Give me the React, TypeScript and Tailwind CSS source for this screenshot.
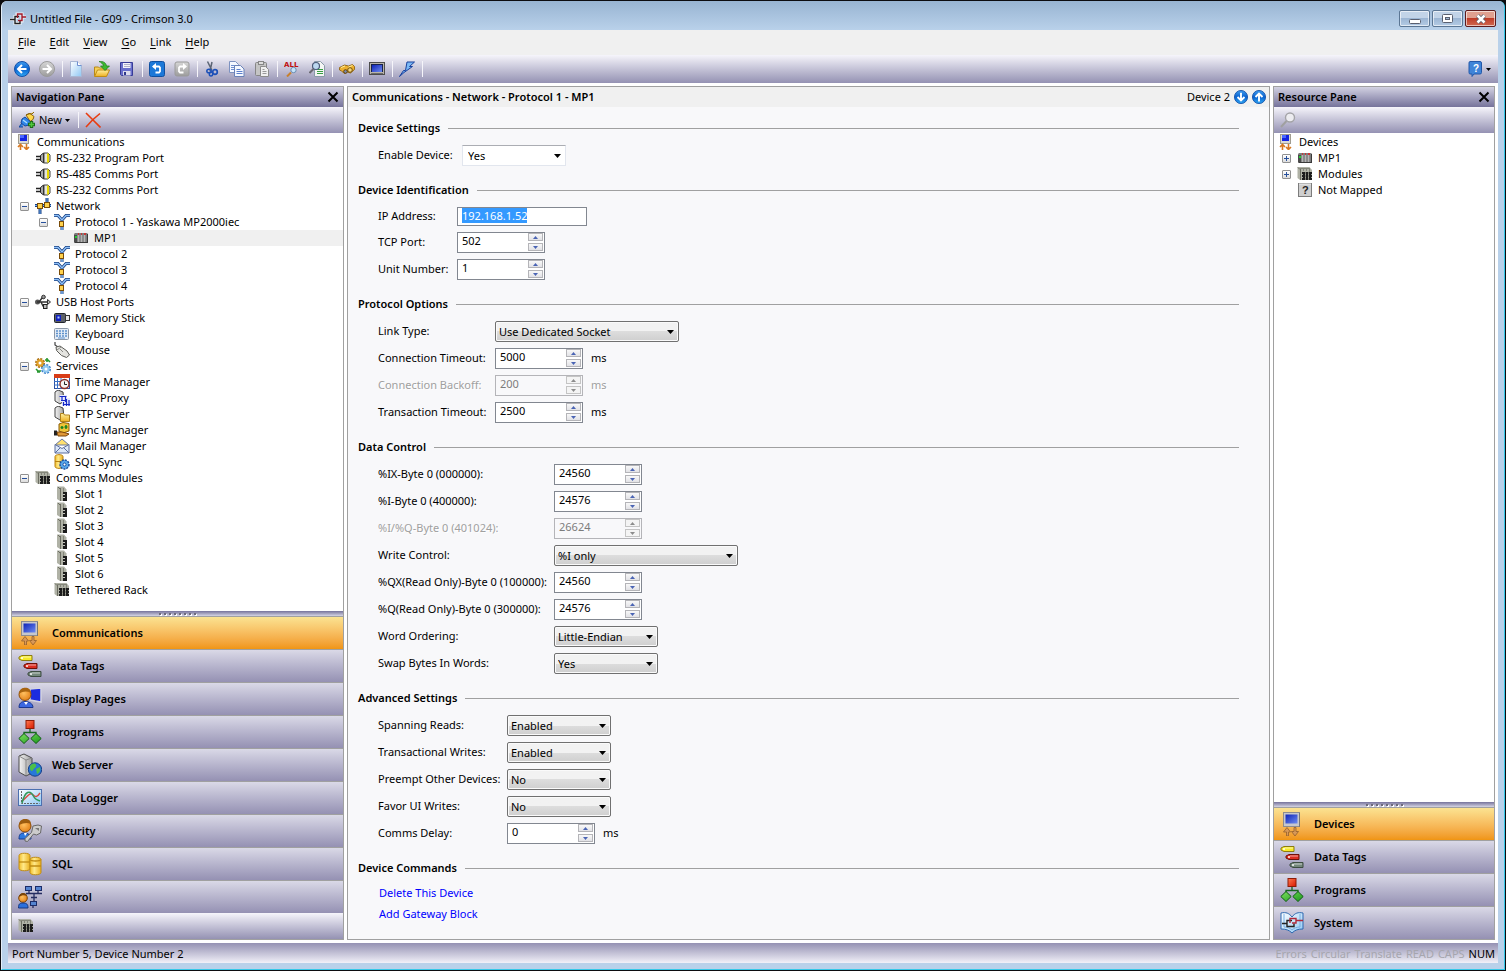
import { useEffect, useId, useRef } from 'react';
import type { ReactNode } from 'react';

type IconProps = { size?: number };

function Svg16({ size = 16, children }: IconProps & { children: ReactNode }) {
  return (
    <svg width={size} height={size} viewBox="0 0 16 16" fill="none" className="shrink-0" aria-hidden="true">
      {children}
    </svg>
  );
}

function Svg24({ children }: { children: ReactNode }) {
  return (
    <svg width={24} height={24} viewBox="0 0 24 24" fill="none" className="shrink-0" aria-hidden="true">
      {children}
    </svg>
  );
}

/* ---------- shared gradients ---------- */

function Gradients() {
  return (
    <svg width="0" height="0" className="absolute" aria-hidden="true">
      <defs>
        <linearGradient id="gBlue" x1="0" y1="0" x2="0" y2="1">
          <stop offset="0" stopColor="#3f9df0" />
          <stop offset="0.5" stopColor="#0a62cf" />
          <stop offset="1" stopColor="#2fa8f5" />
        </linearGradient>
        <linearGradient id="gGrey" x1="0" y1="0" x2="0" y2="1">
          <stop offset="0" stopColor="#d6d6d6" />
          <stop offset="1" stopColor="#9c9c9c" />
        </linearGradient>
        <linearGradient id="gGold" x1="0" y1="0" x2="0" y2="1">
          <stop offset="0" stopColor="#fff0a0" />
          <stop offset="1" stopColor="#eeb020" />
        </linearGradient>
        <linearGradient id="gGoldH" x1="0" y1="0" x2="1" y2="0">
          <stop offset="0" stopColor="#f2bd28" />
          <stop offset="0.4" stopColor="#ffe98a" />
          <stop offset="1" stopColor="#eab01e" />
        </linearGradient>
        <linearGradient id="gScreen" x1="0" y1="0" x2="1" y2="1">
          <stop offset="0" stopColor="#0e23b8" />
          <stop offset="1" stopColor="#6f8cf0" />
        </linearGradient>
        <linearGradient id="gRed" x1="0" y1="0" x2="1" y2="1">
          <stop offset="0" stopColor="#ff7a50" />
          <stop offset="1" stopColor="#d81800" />
        </linearGradient>
        <linearGradient id="gGreen" x1="0" y1="0" x2="1" y2="1">
          <stop offset="0" stopColor="#7fe060" />
          <stop offset="1" stopColor="#18981a" />
        </linearGradient>
        <linearGradient id="gServer" x1="0" y1="0" x2="1" y2="0">
          <stop offset="0" stopColor="#f4f4f4" />
          <stop offset="1" stopColor="#a0a0a0" />
        </linearGradient>
        <radialGradient id="gFace" cx="0.4" cy="0.4" r="0.7">
          <stop offset="0" stopColor="#ffc060" />
          <stop offset="1" stopColor="#e07a10" />
        </radialGradient>
        <linearGradient id="gSky" x1="0" y1="0" x2="1" y2="1">
          <stop offset="0" stopColor="#ffffff" />
          <stop offset="1" stopColor="#8fc8f4" />
        </linearGradient>
      </defs>
    </svg>
  );
}

/* ---------- title bar and toolbar icons ---------- */

const AppIcon = () => (
  <Svg16>
    <path d="M0 8.500h5M9 5.500H5v7h5V9M7 8V3h5v7H8M12 6h4" stroke="#eef4fa" strokeWidth="3" />
    <path d="M0 8.500h5M9 5.500H5v7h5V10" stroke="#222" strokeWidth="1.400" />
    <path d="M7.500 7V3h4.500v6.500H8M12 6h4" stroke="#a01828" strokeWidth="1.400" />
  </Svg16>
);

const BackIcon = () => (
  <Svg16>
    <circle cx="8" cy="8" r="7.500" fill="url(#gBlue)" stroke="#1450a8" />
    <path d="M12.500 8H4.500M8 4L4 8l4 4" stroke="#fff" strokeWidth="2" />
  </Svg16>
);

const ForwardIcon = () => (
  <Svg16>
    <circle cx="8" cy="8" r="7.500" fill="url(#gGrey)" stroke="#9a9a9a" />
    <path d="M3.500 8h8M8 4l4 4-4 4" stroke="#fff" strokeWidth="2" />
  </Svg16>
);

const ArrowCircle = ({ up = false }: { up?: boolean }) => (
  <svg width="14" height="14" viewBox="0 0 16 16" fill="none" className="shrink-0" aria-hidden="true">
    <circle cx="8" cy="8" r="7.500" fill="url(#gBlue)" stroke="#1450a8" />
    <path d={up ? 'M8 13V4.500M4 8l4-4 4 4' : 'M8 3v8.500M4 8l4 4 4-4'} stroke="#fff" strokeWidth="2.200" />
  </svg>
);

const NewFileIcon = () => (
  <Svg16>
    <path d="M1.500 0.500h7l4 4v11h-11z" fill="url(#gSky)" stroke="#a9b7d3" />
    <path d="M8.500 0.500v4h4" fill="#fff" stroke="#6f8fd0" />
  </Svg16>
);

const OpenIcon = () => (
  <Svg16>
    <path d="M0.500 14.500v-8.500h4l1 1h7v7.500z" fill="#f5cf58" stroke="#b88a18" />
    <path d="M0.500 15.500l3-6.500h12l-3 6.500z" fill="url(#gGold)" stroke="#c08c14" />
    <path d="M5 0.500c4-0.500 7 1 7.500 4.500h3L11 9.500 6.500 5H9.500C9 3 7.500 1.500 5 0.500z" fill="#3cb830" stroke="#1c7a18" strokeWidth="0.700" />
  </Svg16>
);

const SaveIcon = () => (
  <Svg16>
    <path d="M1.500 1.500h12v13h-11l-1-1z" fill="#6a70cc" stroke="#383c98" />
    <path d="M4 2h7.500v5H4z" fill="#f4f4fa" />
    <path d="M5 3.500h6M5 5.500h6" stroke="#b0b0c8" />
    <path d="M4 10h7.500v4.500H4z" fill="#dcdcec" />
    <path d="M5 11h2v3H5z" fill="#30388a" />
  </Svg16>
);

const UndoIcon = () => (
  <Svg16>
    <rect x="0.500" y="0.500" width="15" height="15" rx="2" fill="#1c78d8" stroke="#1050a0" />
    <path d="M4.500 5.500h5.500l1 1v4l-1 1H6.500" stroke="#fff" strokeWidth="1.800" />
    <path d="M3 5.500l4-3.500v7z" fill="#fff" />
  </Svg16>
);

const RedoIcon = () => (
  <Svg16>
    <rect x="1" y="1" width="14" height="14" rx="2" fill="url(#gGrey)" stroke="#9a9a9a" />
    <path d="M11 5.500H6l-1 1v4l1 1h3.500" stroke="#fff" strokeWidth="1.800" />
    <path d="M13 5.500L9 2v7z" fill="#fff" />
  </Svg16>
);

const CutIcon = () => (
  <Svg16>
    <path d="M3.500 0.500L8 9.500M8 1L6 10" stroke="#5b6474" strokeWidth="1.500" />
    <ellipse cx="5" cy="10" rx="2.200" ry="1.800" stroke="#1c50b8" strokeWidth="1.500" />
    <ellipse cx="11" cy="11" rx="2.300" ry="2.300" stroke="#1c50b8" strokeWidth="1.700" />
    <ellipse cx="7" cy="13" rx="1.700" ry="2" stroke="#1c50b8" strokeWidth="1.500" />
  </Svg16>
);

const CopyIcon = () => (
  <Svg16>
    <path d="M0.500 0.500h6l3 3v8h-9z" fill="#f4f8ff" stroke="#7d92c0" />
    <path d="M2 4.500h4M2 6.500h4M2 8.500h4" stroke="#6f8fd0" />
    <path d="M5.500 4.500h6l3.500 3.500v7.500H5.500z" fill="#f4f8ff" stroke="#6a82b8" />
    <path d="M7.500 8.500h4M7.500 10.500h6M7.500 12.500h6" stroke="#5c80cc" />
  </Svg16>
);

const PasteIcon = () => (
  <Svg16>
    <rect x="1.500" y="1.500" width="11" height="13" rx="1" fill="#c4c4c4" stroke="#868686" />
    <rect x="4.500" y="0.500" width="5" height="3" fill="#dedede" stroke="#868686" />
    <path d="M6.500 5.500h5l3 3v7h-8z" fill="#f0f0f0" stroke="#8c8c8c" />
    <path d="M8.500 8.500h2M8.500 10.500h4M8.500 12.500h4" stroke="#999" />
  </Svg16>
);

const FindAllIcon = () => (
  <Svg16>
    <text x="0" y="6" fontSize="7" fontWeight="700" fill="#c01010" fontFamily="DejaVu Sans">ALL</text>
    <circle cx="9.500" cy="9" r="2.700" fill="#c4e4fa" stroke="#6c8cb0" />
    <path d="M7 11.500L3 15.500" stroke="#c8802c" strokeWidth="2" />
  </Svg16>
);

const FindPageIcon = () => (
  <Svg16>
    <path d="M5.500 0.500h6l4 4v11h-10z" fill="#f4f6f4" stroke="#8a9aa8" />
    <path d="M8 8.500h6M8 10.500h6M8 12.500h6" stroke="#36a040" />
    <circle cx="7" cy="5" r="3.500" fill="#bcd8f0" stroke="#4a5a78" strokeWidth="1.200" />
    <path d="M4.500 8L0.500 12" stroke="#6a6a72" strokeWidth="2" />
  </Svg16>
);

const BinocularIcon = () => (
  <Svg16>
    <path d="M0.500 6.500l5-2.500 4 1 4-1.500 2 2v3l-4 3.500-3-1-3 1.500-3-2.500-2-1z" fill="#ecb030" stroke="#8a5c08" strokeWidth="0.800" />
    <circle cx="11" cy="9" r="2.300" fill="#f4d880" stroke="#704c08" />
    <circle cx="6.500" cy="10.500" r="1.800" fill="#7c8cac" stroke="#604008" />
    <path d="M2 6.500l4-1.500M9.500 6l4-1.500" stroke="#fff0a0" />
  </Svg16>
);

const MonitorIcon = () => (
  <Svg16>
    <rect x="0.500" y="1.500" width="15" height="12" fill="#b8b4a8" stroke="#4c4c4c" />
    <rect x="2" y="3" width="12" height="8" fill="#16204c" />
    <rect x="3" y="4" width="10" height="7" fill="url(#gScreen)" />
    <path d="M2 12.500h12" stroke="#6a6a6a" />
  </Svg16>
);

const BoltIcon = () => (
  <Svg16>
    <path d="M8 1h7.500l-5 4.500h3L5 11.500 0.500 15.500 4.500 9.500h2z" fill="#7ab8f4" stroke="#18409c" />
  </Svg16>
);

const HelpIcon = () => (
  <Svg16>
    <path d="M2 0.500h10q1.500 0 1.500 1.500v9.500q0 1.500-1.500 1.500H6L4 15.500V13H2Q1 13 1 11.500V2Q1 0.500 2 0.500z" fill="#3f84d8" stroke="#2458a8" />
    <text x="5" y="11" fontSize="10" fontWeight="700" fill="#fff" fontFamily="Liberation Sans">?</text>
  </Svg16>
);

const PlugAddIcon = () => (
  <Svg16>
    <path d="M7 3l3-1.500 3 .5 2-2M9 6L7 3l4-1.500 4 3-1 3-3 2z" fill="#ffd84c" stroke="#8a6410" />
    <path d="M3 7l3-2 6 5-2 3-4 1-4-3zM3 11l-3 4h4" fill="#2f86e8" stroke="#14489c" />
    <path d="M4 8l4 3" stroke="#a8dcff" strokeWidth="1.400" />
    <path d="M12.500 9v7M9 12.500h7" stroke="#1c6a18" strokeWidth="3.400" />
    <path d="M12.500 10v5M10 12.500h5" stroke="#50c83c" strokeWidth="1.600" />
  </Svg16>
);

const DeleteIcon = () => (
  <Svg16>
    <path d="M1 1l6 6 8.500 8.500M15 1.500L8 7.500 1 15" stroke="#e83c10" strokeWidth="1.600" />
  </Svg16>
);

const CloseIcon = () => (
  <svg width="12" height="12" viewBox="0 0 12 12" fill="none" aria-hidden="true">
    <path d="M1.500 1.500l9 9M10.500 1.500l-9 9" stroke="#000" strokeWidth="2" />
  </svg>
);

const SearchIcon = () => (
  <Svg16>
    <circle cx="10" cy="5.500" r="4.500" fill="#ececf0" stroke="#a4a4a8" strokeWidth="1.400" />
    <path d="M6.500 9L1 15" stroke="#a0a0a0" strokeWidth="2" />
  </Svg16>
);

/* ---------- tree icons ---------- */

const CommsSmall = () => (
  <Svg16>
    <rect x="2.500" y="0.500" width="10" height="9" fill="#d8d8d4" stroke="#a09c90" />
    <rect x="4" y="1" width="7" height="6" fill="#1424e0" />
    <path d="M4 1h4v3H4z" fill="#4c68ff" />
    <path d="M4.500 16v-5M2 13l2.500-2.500L7 13M10.500 10v5M8 13l2.500 2.500L13 13" stroke="#d87820" strokeWidth="1.600" />
  </Svg16>
);

const PortIcon = () => (
  <Svg16>
    <path d="M1 6.500h5M1 9.500h5" stroke="#222" strokeWidth="1.500" />
    <path d="M5.500 5.500l3-2.500v10l-3-2.500z" fill="#a8a8a8" stroke="#222" />
    <path d="M9 3h4l2 2v6l-2 2H9z" fill="#e4e4dc" stroke="#444" />
    <path d="M13 3.500v9" stroke="#e8d800" strokeWidth="2" />
  </Svg16>
);

const NetworkIcon = () => (
  <Svg16>
    <path d="M0 7.500h16M5 8v8M12 0v7" stroke="#173f80" strokeWidth="3" />
    <path d="M0 7.500h16M5 8v8M12 0v7" stroke="#6eaaf0" />
    <rect x="2.500" y="5.500" width="5" height="5" fill="#ffd24c" stroke="#7a4c08" />
    <rect x="9.500" y="4.500" width="5" height="5" fill="#ffd24c" stroke="#7a4c08" />
  </Svg16>
);

const ProtocolIcon = () => (
  <Svg16>
    <path d="M0 1.500h4l4 4.500 4-4.500h4M8 7v9" stroke="#173f80" strokeWidth="3" />
    <path d="M0 1.500h4l4 4.500 4-4.500h4M8 7v9" stroke="#8ec0f8" strokeWidth="1.400" />
    <rect x="5.500" y="7.500" width="4" height="5" fill="#ffd24c" stroke="#7a4c08" />
  </Svg16>
);

const PlcIcon = () => (
  <Svg16>
    <path d="M1 4l1-1h12.500v10H1z" fill="#7c7c7c" />
    <path d="M1 5h3v7H1z" fill="#4c4c4c" />
    <path d="M5.500 5v7M8.500 5v7M11.500 5v7" stroke="#b4b4b4" strokeWidth="1.500" />
    <path d="M2 6h2v2H2z" fill="#20d030" />
    <path d="M5 4h1M8 4h1M11 4h2" stroke="#e02020" strokeWidth="1.500" />
    <path d="M14.500 4v9M2 12.500h13" stroke="#3a3a3a" />
  </Svg16>
);

const UsbIcon = () => (
  <Svg16>
    <circle cx="2.500" cy="8" r="2.500" fill="#555" />
    <path d="M2 8h12M4 8l3-4h2M6 8l2 4h2" stroke="#333" strokeWidth="1.400" />
    <path d="M12.500 5.500L15.500 8l-3 2.500z" fill="#bbb" stroke="#333" />
    <circle cx="8.500" cy="3" r="1.800" fill="#999" stroke="#333" />
    <rect x="8.500" y="10.500" width="3.500" height="4" fill="#bbb" stroke="#222" />
  </Svg16>
);

const StickIcon = () => (
  <Svg16>
    <rect x="0.500" y="3.500" width="11" height="9" rx="1" fill="#5c6068" stroke="#20242c" />
    <rect x="2" y="5" width="5" height="6" fill="#1020c0" />
    <rect x="3.500" y="6.500" width="2" height="2" fill="#b0c8ff" />
    <rect x="11.500" y="5.500" width="4" height="5" fill="#e8e8e8" stroke="#333" />
  </Svg16>
);

const KeyboardIcon = () => (
  <Svg16>
    <rect x="0.500" y="2.500" width="14" height="11" rx="1" fill="#e4ecf6" stroke="#8c98a8" />
    <path d="M2 5h11M2 7.500h11M2 10h11" stroke="#5c90cc" strokeWidth="1.500" strokeDasharray="2 1" />
    <path d="M4 12h7" stroke="#5c90cc" />
  </Svg16>
);

const MouseIcon = () => (
  <Svg16>
    <path d="M1 0v3l3 2" stroke="#444" strokeWidth="1.200" />
    <path d="M2 5l4-1 7 5 2.500 4-3 2.500-5-2-5-5z" fill="#e4e4e0" stroke="#5c5c58" />
    <path d="M3 8l4-3M6 7l3 3" stroke="#8a8a86" />
  </Svg16>
);

const GearsIcon = () => (
  <Svg16>
    <circle cx="5" cy="5" r="4" stroke="#a86c10" strokeWidth="2" strokeDasharray="2 1.100" />
    <circle cx="5" cy="5" r="2.600" fill="#fff" stroke="#e0a028" strokeWidth="2.200" />
    <circle cx="11" cy="11" r="4" stroke="#3c80c8" strokeWidth="2" strokeDasharray="2 1.100" />
    <circle cx="11" cy="11" r="2.600" fill="#fff" stroke="#90c8f0" strokeWidth="2.200" />
    <path d="M10 2h3l2 2M12 0v4M1 11l2 2h3M2 14h3" stroke="#289830" strokeWidth="1.600" />
  </Svg16>
);

const TimeIcon = () => (
  <Svg16>
    <rect x="0.500" y="0.500" width="15" height="14" fill="#fff" stroke="#3050a0" />
    <path d="M0 0h16v4H0z" fill="#d83c18" />
    <path d="M3.500 4v11M7 4v11M0 7.500h16M0 11h16" stroke="#3870c8" />
    <circle cx="10.500" cy="10" r="4.500" fill="#f4f4f4" stroke="#8c3028" strokeWidth="1.400" />
    <path d="M10.500 7.500V10.500H13" stroke="#222" />
  </Svg16>
);

const Tower = () => <path d="M1 2l3-2 5 2 1 9-4 3-5-3z" fill="url(#gServer)" stroke="#444" />;

const OpcIcon = () => (
  <Svg16>
    <Tower />
    <path d="M6 5h7v3h3v8H8v-4H6z" fill="#e8ecff" />
    <path d="M5.500 6.500h7M8 6v5M11.500 6v6M7 10.500h5M12.500 9v7M15 10v6M9 14.500h7M9.500 12v4" stroke="#1428c8" strokeWidth="1.200" />
  </Svg16>
);

const FtpIcon = () => (
  <Svg16>
    <Tower />
    <path d="M6.500 15.500v-8h3l1 1.500h5v6.500z" fill="url(#gGold)" stroke="#b08018" />
  </Svg16>
);

const SyncIcon = () => (
  <Svg16>
    <path d="M5 2l4-1.500 6 1V9l-6 2-4-2z" fill="#f0c438" stroke="#8a5c08" />
    <path d="M8 4v3M6.500 5.500h3M12 3v4M10.500 5h3" stroke="#188020" strokeWidth="1.500" />
    <path d="M0 8.500h3v5H0z" fill="#222" />
    <path d="M3 10h5l4 1 3 1-3 2H4z" fill="#e09838" stroke="#7a4408" />
  </Svg16>
);

const MailIcon = () => (
  <Svg16>
    <path d="M1 7l7-6 7 6z" fill="#ffe070" stroke="#6878a0" />
    <path d="M1 6.500l7 4 7-4v8.500H1z" fill="#dce8fa" stroke="#5a6c9c" />
    <path d="M1 15l5-5M15 15l-5-5" stroke="#5a6c9c" />
  </Svg16>
);

const SqlSmall = () => (
  <Svg16>
    <path d="M1 2.500C1 0 9 0 9 2.500v10C9 15 1 15 1 12.500z" fill="url(#gGoldH)" stroke="#b88010" />
    <path d="M1 7.500h8" stroke="#b88010" />
    <circle cx="10.500" cy="10.500" r="4.500" fill="#58a8ec" stroke="#1c50a0" strokeDasharray="2 1" strokeWidth="1.500" />
    <circle cx="10.500" cy="10.500" r="1.500" fill="#fff" stroke="#1c50a0" />
  </Svg16>
);

const RackIcon = () => (
  <Svg16>
    <path d="M0.500 1h12l2.500 3v10H3L0.500 12z" fill="#b0b2a6" />
    <path d="M3.500 3v11M1 1.500l2 2" stroke="#6c6e62" />
    <path d="M3 2.500h10M6.500 2v3M9.500 2v3M12.500 3v3" stroke="#84867a" />
    <path d="M5 6h10v8H5z" fill="#1c1c1c" />
    <path d="M8.500 6v8M11.500 6v8" stroke="#7c7e72" />
    <path d="M5 8.500h10M5 11.500h10" stroke="#9a9c90" strokeDasharray="1 2" />
  </Svg16>
);

const SlotIcon = () => (
  <Svg16>
    <path d="M3 0.500h7l2.500 3V15H6l-3-2z" fill="#b0b2a6" />
    <path d="M6.500 2v13M4 1l2 2" stroke="#6c6e62" />
    <path d="M9.500 2v4" stroke="#84867a" />
    <path d="M9 6h4v9H9z" fill="#1c1c1c" />
    <path d="M9 8.500h2M9 11.500h2" stroke="#c8c8c0" />
  </Svg16>
);

const UnknownIcon = () => (
  <Svg16>
    <rect x="1.500" y="1.500" width="13" height="13" fill="#cfcfcf" stroke="#7c7c7c" />
    <path d="M2 2h12" stroke="#f0f0f0" />
    <text x="5" y="12" fontSize="11" fontWeight="700" fill="#222" fontFamily="Liberation Sans">?</text>
  </Svg16>
);

/* ---------- category icons ---------- */

const CommsLarge = () => (
  <Svg24>
    <rect x="3.500" y="0.500" width="16" height="14" fill="#c8c8cc" stroke="#8c8c90" />
    <rect x="5.500" y="2.500" width="12" height="9" fill="url(#gScreen)" />
    <path d="M19.500 1v14" stroke="#777" />
    <path d="M6.500 24v-4h-3L7 15.500l3.500 4.500h-2v4zM14 15.500v4h-2.500L15 24l3.500-4.500H16v-4z" fill="#d89858" stroke="#94602c" strokeWidth="0.800" />
  </Svg24>
);

const TagsIcon = () => (
  <Svg24>
    <path d="M4 1.500h10v5H4L1 5V3z" fill="#f6ea28" stroke="#8c7c10" />
    <path d="M9 9.500h10v5H9L6 13v-2z" fill="#dc2c20" stroke="#701008" />
    <path d="M13 17.500h10v5H13L10 21v-2z" fill="#74887c" stroke="#3c4c40" />
    <path d="M5 3h8M10 11h8M14 19h8" stroke="#fff" strokeOpacity="0.600" />
    <circle cx="4" cy="4" r="1" fill="#fff" />
    <circle cx="9" cy="12" r="1" fill="#fff" />
    <circle cx="13" cy="20" r="1" fill="#fff" />
  </Svg24>
);

const DisplayIcon = () => (
  <Svg24>
    <path d="M12 2l11-1v14l-11-2z" fill="#1c2ce0" stroke="#d4d4e0" strokeWidth="1.500" />
    <circle cx="7" cy="7.500" r="6" fill="url(#gFace)" stroke="#8a4c08" />
    <path d="M1 7c0-8 12-8 12-1-4-2-8-2-12 1z" fill="#a86410" />
    <path d="M1 20.500c0-4 2-6 6-6s8 2 8 6z" fill="#3c68e0" stroke="#1c3890" />
    <path d="M6 15l2 3 2-3z" fill="#fff" />
  </Svg24>
);

const ProgramsIcon = () => (
  <Svg24>
    <path d="M12 9v4M6 16v-3.500h12V16" stroke="#186820" strokeWidth="1.300" />
    <rect x="8" y="0.500" width="8" height="8" fill="url(#gRed)" stroke="#8c1c08" />
    <path d="M6 13.500l5.200 5-5.200 5-5.200-5zM18 13.500l5.200 5-5.200 5-5.200-5z" fill="url(#gGreen)" stroke="#105c14" />
  </Svg24>
);

const WebIcon = () => (
  <Svg24>
    <path d="M1 3l5-2 8 4v15l-6 3-7-4z" fill="url(#gServer)" stroke="#4c4c4c" />
    <path d="M8 7v15M1 3l7 4 6-2" stroke="#8a8a8a" />
    <circle cx="17" cy="16.500" r="6.700" fill="#2878d8" stroke="#184088" />
    <path d="M12 13c3-3 5-3 6-1s-2 3-3 5-2 1-3-1zM18 16l4-2c1 4-1 6-3 7z" fill="#4cc048" />
  </Svg24>
);

const LoggerIcon = () => (
  <Svg24>
    <rect x="0.500" y="3.500" width="23" height="16" fill="url(#gSky)" stroke="#4c70b0" />
    <path d="M3.500 5v12.500h18" stroke="#666" strokeDasharray="2 1" />
    <path d="M4 15c4-2 7-9 10-7s4 5 8-1" stroke="#d84c40" strokeWidth="1.400" />
    <path d="M4 17c3-12 8-14 12-6 1 2 3 3 6 4" stroke="#30985c" strokeWidth="1.500" />
  </Svg24>
);

const SecurityIcon = () => (
  <Svg24>
    <circle cx="7" cy="7" r="6" fill="url(#gFace)" stroke="#8a4c08" />
    <path d="M1 6c0-8 12-8 12-1-4-2-8-1-12 1z" fill="#9c5c10" />
    <path d="M1 20c0-4 1-6 5-6s7 2 7 6z" fill="#2c78e0" stroke="#183c90" />
    <path d="M6 14l1 3 2-3z" fill="#fff" />
    <path d="M15 7l5-1 3.500 1-1 7-4 2-3-1-6 7.500-2.500-.5v-2.500l6.500-6z" fill="#ccc" stroke="#686868" />
    <path d="M17 9h4v3z" fill="#777" />
  </Svg24>
);

const SqlIcon = () => (
  <Svg24>
    <path d="M1 3.500c0-3 11-3 11 0v13c0 3-11 3-11 0z" fill="url(#gGoldH)" stroke="#c08c14" />
    <path d="M1 10h11" stroke="#c08c14" strokeWidth="1.300" />
    <path d="M12 7.500c0-3 11-3 11 0v13c0 3-11 3-11 0z" fill="url(#gGoldH)" stroke="#c08c14" />
    <path d="M12 14h11M12 7.500c1 2 10 2 11 0" stroke="#c08c14" strokeWidth="1.300" />
  </Svg24>
);

const ControlIcon = () => (
  <Svg24>
    <path d="M8 8.500h16M11 5v3M20 5v3M16 8v9M13 12.500h6M15 20v3" stroke="#242c60" strokeWidth="1.300" />
    <rect x="7.500" y="1.500" width="6" height="4" fill="#5484d0" stroke="#1c2c68" />
    <rect x="17.500" y="1.500" width="6" height="4" fill="#5484d0" stroke="#1c2c68" />
    <rect x="12.500" y="16.500" width="6" height="4" fill="#5484d0" stroke="#1c2c68" />
    <circle cx="5" cy="13" r="4.300" fill="url(#gFace)" stroke="#7a4408" />
    <path d="M1 12c0-5 8-5 8-1-3-1-5-1-8 1z" fill="#7a4408" />
    <path d="M0.500 23c0-4 1-5 4.500-5s5 1 5 5z" fill="#2c70dc" stroke="#183880" />
  </Svg24>
);

const SystemIcon = () => (
  <Svg24>
    <path d="M1 2c5-1 8 0 11 4 3-4 6-5 11-4v16c-5 0-8 1-11 4-3-3-6-4-11-4z" fill="url(#gSky)" stroke="#2c68b0" />
    <path d="M4 3v13c3 0 6 1 8 3 2-2 5-3 8-3V3" stroke="#78b0e4" />
    <path d="M2 12.500h5M12 9.500H7v6h7v-3" stroke="#222" strokeWidth="1.400" />
    <path d="M10 12V7.500h6V12h-4M16 9.500h7" stroke="#b02838" strokeWidth="1.400" />
  </Svg24>
);

/* ---------- small shared parts ---------- */

const MenuArrow = () => (
  <svg width="5" height="3" viewBox="0 0 5 3" aria-hidden="true">
    <path d="M0 0h5L2.500 3z" fill="#000" />
  </svg>
);

const ToolSeparator = () => <span className="mx-0.5 h-4 w-px shrink-0 bg-[#f6f5fa]" />;

function ToolButton({ label, children }: { label: string; children: ReactNode }) {
  return (
    <button type="button" aria-label={label} className="flex h-6 w-[25px] shrink-0 items-center pl-1">
      {children}
    </button>
  );
}

function PaneHeader({ title }: { title: string }) {
  return (
    <header className="flex h-5 shrink-0 items-center justify-between bg-linear-to-b from-[#d3d2e2] to-[#76739b] pr-1 pl-1">
      <h2 className="pb-px font-semibold">{title}</h2>
      <button type="button" aria-label={`Close ${title}`}>
        <CloseIcon />
      </button>
    </header>
  );
}

function Splitter() {
  return (
    <div className="flex h-[5px] shrink-0 items-center justify-center gap-[3px] bg-linear-to-b from-[#76739b] to-[#d6d5e4]">
      {Array.from({ length: 8 }, (_, i) => (
        <span key={i} className="size-0.5 bg-[#6d6b7c] shadow-[1px_1px_0_#ffffff]" />
      ))}
    </div>
  );
}

interface Category {
  label: string;
  icon: () => ReactNode;
  active?: boolean;
}

function CategoryList({ items }: { items: Category[] }) {
  return (
    <nav className="shrink-0">
      {items.map(({ label, icon: Icon, active }) => (
        <button
          key={label}
          type="button"
          className={`flex h-[33px] w-full items-center gap-2.5 border-t border-[#a0a0a0] bg-linear-to-b pl-1.5 font-semibold ${
            active ? 'from-[#fbe391] to-[#f09511]' : 'from-[#dad9e7] to-[#9591b3]'
          }`}
        >
          <Icon />
          <span className="pb-px">{label}</span>
        </button>
      ))}
    </nav>
  );
}

interface TreeItem {
  label: string;
  icon: () => ReactNode;
  level: number;
  toggle?: '-' | '+';
  selected?: boolean;
}

const INDENT = ['w-1', 'w-[23px]', 'w-[42px]', 'w-[61px]'];

function Tree({ items }: { items: TreeItem[] }) {
  return (
    <ul className="min-h-0 flex-1 overflow-hidden bg-white pt-px">
      {items.map(({ label, icon: Icon, level, toggle, selected }) => (
        <li key={label + level} className={`flex h-4 items-center ${selected ? 'bg-[#f0f0f0]' : ''}`}>
          <span className={`flex shrink-0 justify-end ${INDENT[level]}`}>
            {toggle && (
              <button
                type="button"
                aria-label={`${toggle === '-' ? 'Collapse' : 'Expand'} ${label}`}
                className="mr-1.5 rounded-[1px] border border-[#919191] bg-linear-to-b from-white to-[#dcdcdc]"
              >
                <svg width="7" height="7" viewBox="0 0 7 7" aria-hidden="true">
                  <path d={toggle === '-' ? 'M1 3.500h5' : 'M1 3.500h5M3.500 1v5'} stroke="#27509c" />
                </svg>
              </button>
            )}
          </span>
          <Icon />
          <span className="pb-px pl-[5px] whitespace-nowrap">{label}</span>
        </li>
      ))}
    </ul>
  );
}

/* ---------- form parts ---------- */

const ROW_COLUMNS: Record<string, string> = {
  settings: 'grid-cols-[84px_1fr]',
  identification: 'grid-cols-[79px_1fr]',
  options: 'grid-cols-[117px_1fr]',
  data: 'grid-cols-[176px_1fr]',
  advanced: 'grid-cols-[129px_1fr]',
};

function Section({ title, children }: { title: string; children: ReactNode }) {
  return (
    <section>
      <div className="flex h-4 items-center gap-2">
        <h3 className="pb-px font-semibold">{title}</h3>
        <hr className="flex-1 border-[#a0a0a0]" />
      </div>
      <div className="flex flex-col gap-1.5 pt-[9px] pl-5">{children}</div>
    </section>
  );
}

interface RowProps {
  label: string;
  columns: string;
  disabled?: boolean;
  unit?: string;
  children: (id: string) => ReactNode;
}

function Row({ label, columns, disabled, unit, children }: RowProps) {
  const id = useId();
  const tone = disabled ? 'text-[#a0a0a0] [text-shadow:1px_1px_0_#ffffff]' : '';
  return (
    <div className={`grid items-center ${ROW_COLUMNS[columns]}`}>
      <label htmlFor={id} className={`pb-0.5 whitespace-nowrap ${tone}`}>
        {label}
      </label>
      <div className="flex items-center gap-2">
        {children(id)}
        {unit && <span className={`pb-0.5 ${tone}`}>{unit}</span>}
      </div>
    </div>
  );
}

interface SelectProps extends Omit<RowProps, 'children'> {
  value: string;
  width: string;
  flat?: boolean;
}

function SelectRow({ value, width, flat, ...row }: SelectProps) {
  return (
    <Row {...row}>
      {(id) => (
        <span className={`relative flex h-[21px] items-center ${width}`}>
          <select
            id={id}
            defaultValue={value}
            className={`h-full w-full appearance-none border outline-none ${
              flat
                ? 'border-[#e2e6ee] border-t-[#abadb3] bg-white pl-[5px]'
                : 'rounded-[2px] border-[#707070] bg-linear-to-b from-[#f2f2f2] from-50% via-[#dddddd] via-50% to-[#cfcfcf] pl-[3px] inset-shadow-[0_0_0_1px_#fafafa]'
            }`}
          >
            <option>{value}</option>
          </select>
          <span className="pointer-events-none absolute right-[5px]">
            <svg width="7" height="4" viewBox="0 0 7 4" className="block" aria-hidden="true">
              <path d="M0 0h7L3.500 4z" fill="#000" />
            </svg>
          </span>
        </span>
      )}
    </Row>
  );
}

function SpinButton({ label, up, disabled }: { label: string; up?: boolean; disabled?: boolean }) {
  return (
    <button
      type="button"
      aria-label={label}
      disabled={disabled}
      className={`flex h-2 w-[15px] items-center justify-center border ${
        disabled ? 'border-[#c4c4c4] bg-[#f4f4f4]' : 'border-[#b4b4b8] bg-linear-to-b from-[#f8f8f8] to-[#e2e2e6]'
      }`}
    >
      <svg width="5" height="3" viewBox="0 0 5 3" aria-hidden="true">
        <path d={up ? 'M0 3h5L2.500 0z' : 'M0 0h5L2.500 3z'} fill={disabled ? '#8c8c8c' : '#4a64b4'} />
      </svg>
    </button>
  );
}

function SpinRow({ value, ...row }: Omit<RowProps, 'children'> & { value: string }) {
  const { disabled, label } = row;
  return (
    <Row {...row}>
      {(id) => (
        <span
          className={`flex h-[21px] w-[88px] border pr-px ${
            disabled ? 'border-[#b4b4b8] bg-[#f8f8fa]' : 'border-[#828790] bg-white'
          }`}
        >
          <input
            id={id}
            type="text"
            defaultValue={value}
            disabled={disabled}
            className="h-[15px] min-w-0 flex-1 bg-transparent pl-1 outline-none disabled:text-[#7c7c7c]"
          />
          <span className="flex flex-col gap-0.5">
            <SpinButton label={`Increase ${label}`} up disabled={disabled} />
            <SpinButton label={`Decrease ${label}`} disabled={disabled} />
          </span>
        </span>
      )}
    </Row>
  );
}

function AddressRow() {
  const ref = useRef<HTMLInputElement>(null);

  useEffect(() => {
    ref.current?.focus();
    ref.current?.select();
  }, []);

  return (
    <Row label="IP Address:" columns="identification">
      {(id) => (
        <input
          ref={ref}
          id={id}
          type="text"
          defaultValue="192.168.1.52"
          className="h-[19px] w-[130px] border border-[#828790] bg-white pb-0.5 pl-1 outline-none selection:bg-[#3399ff] selection:text-white"
        />
      )}
    </Row>
  );
}

/* ---------- data ---------- */

const MENUS = ['File', 'Edit', 'View', 'Go', 'Link', 'Help'];

const NAV_TREE: TreeItem[] = [
  { label: 'Communications', icon: CommsSmall, level: 0 },
  { label: 'RS-232 Program Port', icon: PortIcon, level: 1 },
  { label: 'RS-485 Comms Port', icon: PortIcon, level: 1 },
  { label: 'RS-232 Comms Port', icon: PortIcon, level: 1 },
  { label: 'Network', icon: NetworkIcon, level: 1, toggle: '-' },
  { label: 'Protocol 1 - Yaskawa MP2000iec', icon: ProtocolIcon, level: 2, toggle: '-' },
  { label: 'MP1', icon: PlcIcon, level: 3, selected: true },
  { label: 'Protocol 2', icon: ProtocolIcon, level: 2 },
  { label: 'Protocol 3', icon: ProtocolIcon, level: 2 },
  { label: 'Protocol 4', icon: ProtocolIcon, level: 2 },
  { label: 'USB Host Ports', icon: UsbIcon, level: 1, toggle: '-' },
  { label: 'Memory Stick', icon: StickIcon, level: 2 },
  { label: 'Keyboard', icon: KeyboardIcon, level: 2 },
  { label: 'Mouse', icon: MouseIcon, level: 2 },
  { label: 'Services', icon: GearsIcon, level: 1, toggle: '-' },
  { label: 'Time Manager', icon: TimeIcon, level: 2 },
  { label: 'OPC Proxy', icon: OpcIcon, level: 2 },
  { label: 'FTP Server', icon: FtpIcon, level: 2 },
  { label: 'Sync Manager', icon: SyncIcon, level: 2 },
  { label: 'Mail Manager', icon: MailIcon, level: 2 },
  { label: 'SQL Sync', icon: SqlSmall, level: 2 },
  { label: 'Comms Modules', icon: RackIcon, level: 1, toggle: '-' },
  { label: 'Slot 1', icon: SlotIcon, level: 2 },
  { label: 'Slot 2', icon: SlotIcon, level: 2 },
  { label: 'Slot 3', icon: SlotIcon, level: 2 },
  { label: 'Slot 4', icon: SlotIcon, level: 2 },
  { label: 'Slot 5', icon: SlotIcon, level: 2 },
  { label: 'Slot 6', icon: SlotIcon, level: 2 },
  { label: 'Tethered Rack', icon: RackIcon, level: 2 },
];

const RESOURCE_TREE: TreeItem[] = [
  { label: 'Devices', icon: CommsSmall, level: 0 },
  { label: 'MP1', icon: PlcIcon, level: 1, toggle: '+' },
  { label: 'Modules', icon: RackIcon, level: 1, toggle: '+' },
  { label: 'Not Mapped', icon: UnknownIcon, level: 1 },
];

const NAV_CATEGORIES: Category[] = [
  { label: 'Communications', icon: CommsLarge, active: true },
  { label: 'Data Tags', icon: TagsIcon },
  { label: 'Display Pages', icon: DisplayIcon },
  { label: 'Programs', icon: ProgramsIcon },
  { label: 'Web Server', icon: WebIcon },
  { label: 'Data Logger', icon: LoggerIcon },
  { label: 'Security', icon: SecurityIcon },
  { label: 'SQL', icon: SqlIcon },
  { label: 'Control', icon: ControlIcon },
];

const RESOURCE_CATEGORIES: Category[] = [
  { label: 'Devices', icon: CommsLarge, active: true },
  { label: 'Data Tags', icon: TagsIcon },
  { label: 'Programs', icon: ProgramsIcon },
  { label: 'System', icon: SystemIcon },
];

/* ---------- window parts ---------- */

function TitleBar() {
  const frame = 'flex h-[17px] w-[31px] items-center justify-center rounded-[2px] border inset-shadow-[0_0_0_1px_#ffffff99]';
  return (
    <header className="flex h-[29px] shrink-0 items-center bg-linear-to-b from-[#98b4d2] to-[#b9d1ea] pr-2 pl-2">
      <span className="flex flex-1 items-center gap-1 pt-1.5">
        <AppIcon />
        <h1>Untitled File - G09 - Crimson 3.0</h1>
      </span>
      <span className="flex gap-0.5 pt-1.5">
        <button type="button" aria-label="Minimize" className={`${frame} border-[#5b7694] bg-linear-to-b from-[#c2d4e8] from-50% via-[#9cb6d4] via-50% to-[#b4cbe4]`}>
          <svg width="12" height="10" viewBox="0 0 12 10" aria-hidden="true">
            <rect x="0.500" y="5.500" width="11" height="4" rx="1" fill="#fff" stroke="#5a6070" />
          </svg>
        </button>
        <button type="button" aria-label="Maximize" className={`${frame} border-[#5b7694] bg-linear-to-b from-[#c2d4e8] from-50% via-[#9cb6d4] via-50% to-[#b4cbe4]`}>
          <svg width="11" height="9" viewBox="0 0 11 9" aria-hidden="true">
            <rect x="0.500" y="0.500" width="10" height="8" rx="1" fill="#fff" stroke="#5a6070" />
            <rect x="3.500" y="3.500" width="4" height="2" fill="#a0b8d4" stroke="#5a6070" />
          </svg>
        </button>
        <button type="button" aria-label="Close window" className={`${frame} border-[#5c1a1c] bg-linear-to-b from-[#e0a090] from-50% via-[#bf3c28] via-50% to-[#d06850]`}>
          <svg width="12" height="10" viewBox="0 0 12 10" fill="none" aria-hidden="true">
            <path d="M2.500 1.500l7 7M9.500 1.500l-7 7" stroke="#5a6070" strokeWidth="4" />
            <path d="M2.500 1.500l7 7M9.500 1.500l-7 7" stroke="#fff" strokeWidth="2.500" />
          </svg>
        </button>
      </span>
    </header>
  );
}

function MenuBar() {
  return (
    <nav className="flex h-[25px] shrink-0 items-center gap-3.5 bg-[#f0f0f0] pb-0.5 pl-2.5">
      {MENUS.map((menu) => (
        <button key={menu} type="button">
          <span className="underline underline-offset-2">{menu[0]}</span>
          {menu.slice(1)}
        </button>
      ))}
    </nav>
  );
}

function Toolbar() {
  return (
    <div className="flex h-7 shrink-0 items-center bg-linear-to-b from-[#f6f5fb] to-[#9592b3] pl-0.5">
      <ToolButton label="Back"><BackIcon /></ToolButton>
      <ToolButton label="Forward"><ForwardIcon /></ToolButton>
      <ToolSeparator />
      <ToolButton label="New file"><NewFileIcon /></ToolButton>
      <ToolButton label="Open"><OpenIcon /></ToolButton>
      <ToolButton label="Save"><SaveIcon /></ToolButton>
      <ToolSeparator />
      <ToolButton label="Undo"><UndoIcon /></ToolButton>
      <ToolButton label="Redo"><RedoIcon /></ToolButton>
      <ToolSeparator />
      <ToolButton label="Cut"><CutIcon /></ToolButton>
      <ToolButton label="Copy"><CopyIcon /></ToolButton>
      <ToolButton label="Paste"><PasteIcon /></ToolButton>
      <ToolSeparator />
      <ToolButton label="Find all"><FindAllIcon /></ToolButton>
      <ToolButton label="Find in page"><FindPageIcon /></ToolButton>
      <ToolSeparator />
      <ToolButton label="Browse"><BinocularIcon /></ToolButton>
      <ToolSeparator />
      <ToolButton label="Emulator"><MonitorIcon /></ToolButton>
      <ToolSeparator />
      <ToolButton label="Download"><BoltIcon /></ToolButton>
      <ToolSeparator />
      <button type="button" aria-label="Help" className="mr-[7px] ml-auto flex items-center gap-0.5">
        <HelpIcon />
        <MenuArrow />
      </button>
    </div>
  );
}

function NavigationPane() {
  return (
    <aside className="flex w-[333px] shrink-0 flex-col border border-[#a0a0a0]">
      <PaneHeader title="Navigation Pane" />
      <div className="flex h-[26px] shrink-0 items-center bg-linear-to-b from-[#f6f5fb] to-[#9592b3] pl-[7px]">
        <button type="button" className="flex items-center gap-[3px]">
          <PlugAddIcon />
          <span className="pb-px pl-px">New</span>
          <MenuArrow />
        </button>
        <span className="mr-1.5 ml-2 h-4 w-px bg-[#f6f5fa]" />
        <button type="button" aria-label="Delete">
          <DeleteIcon />
        </button>
      </div>
      <Tree items={NAV_TREE} />
      <Splitter />
      <CategoryList items={NAV_CATEGORIES} />
      <div className="flex h-[26px] shrink-0 items-center bg-linear-to-b from-[#f6f5fb] to-[#9592b3] pl-1.5">
        <button type="button" aria-label="Comms modules">
          <RackIcon />
        </button>
      </div>
    </aside>
  );
}

function ResourcePane() {
  return (
    <aside className="flex w-[222px] shrink-0 flex-col border border-[#a0a0a0]">
      <PaneHeader title="Resource Pane" />
      <div className="flex h-[26px] shrink-0 items-center bg-linear-to-b from-[#f6f5fb] to-[#9592b3] pl-1.5">
        <button type="button" aria-label="Search">
          <SearchIcon />
        </button>
      </div>
      <Tree items={RESOURCE_TREE} />
      <Splitter />
      <CategoryList items={RESOURCE_CATEGORIES} />
    </aside>
  );
}

function DevicePage() {
  return (
    <main className="flex min-w-0 flex-1 flex-col border border-[#a0a0a0] bg-[#f8f8fa]">
      <header className="flex h-5 shrink-0 items-center justify-between bg-[#f0f0f0] pr-[3px] pl-1">
        <h2 className="pb-px font-semibold">Communications - Network - Protocol 1 - MP1</h2>
        <span className="flex items-center gap-1">
          <span className="pb-px">Device 2</span>
          <button type="button" aria-label="Next device"><ArrowCircle /></button>
          <button type="button" aria-label="Previous device"><ArrowCircle up /></button>
        </span>
      </header>
      <form className="flex flex-col gap-4 pt-[13px] pr-[30px] pl-2.5">
        <Section title="Device Settings">
          <SelectRow label="Enable Device:" columns="settings" value="Yes" width="w-[104px]" flat />
        </Section>
        <Section title="Device Identification">
          <AddressRow />
          <SpinRow label="TCP Port:" columns="identification" value="502" />
          <SpinRow label="Unit Number:" columns="identification" value="1" />
        </Section>
        <Section title="Protocol Options">
          <SelectRow label="Link Type:" columns="options" value="Use Dedicated Socket" width="w-[184px]" />
          <SpinRow label="Connection Timeout:" columns="options" value="5000" unit="ms" />
          <SpinRow label="Connection Backoff:" columns="options" value="200" unit="ms" disabled />
          <SpinRow label="Transaction Timeout:" columns="options" value="2500" unit="ms" />
        </Section>
        <Section title="Data Control">
          <SpinRow label="%IX-Byte 0 (000000):" columns="data" value="24560" />
          <SpinRow label="%I-Byte 0 (400000):" columns="data" value="24576" />
          <SpinRow label="%I/%Q-Byte 0 (401024):" columns="data" value="26624" disabled />
          <SelectRow label="Write Control:" columns="data" value="%I only" width="w-[184px]" />
          <SpinRow label="%QX(Read Only)-Byte 0 (100000):" columns="data" value="24560" />
          <SpinRow label="%Q(Read Only)-Byte 0 (300000):" columns="data" value="24576" />
          <SelectRow label="Word Ordering:" columns="data" value="Little-Endian" width="w-[104px]" />
          <SelectRow label="Swap Bytes In Words:" columns="data" value="Yes" width="w-[104px]" />
        </Section>
        <Section title="Advanced Settings">
          <SelectRow label="Spanning Reads:" columns="advanced" value="Enabled" width="w-[104px]" />
          <SelectRow label="Transactional Writes:" columns="advanced" value="Enabled" width="w-[104px]" />
          <SelectRow label="Preempt Other Devices:" columns="advanced" value="No" width="w-[104px]" />
          <SelectRow label="Favor UI Writes:" columns="advanced" value="No" width="w-[104px]" />
          <SpinRow label="Comms Delay:" columns="advanced" value="0" unit="ms" />
        </Section>
        <Section title="Device Commands">
          <a href="#delete" className="ml-px h-[15px] self-start text-[#0000ff]">Delete This Device</a>
          <a href="#gateway" className="ml-px h-[15px] self-start text-[#0000ff]">Add Gateway Block</a>
        </Section>
      </form>
    </main>
  );
}

function StatusBar() {
  return (
    <footer className="flex h-5 shrink-0 items-center justify-between bg-linear-to-b from-[#9592b3] to-[#f2f1f8] pr-[3px] pl-1">
      <span>Port Number 5, Device Number 2</span>
      <span className="flex gap-1 text-[#a6a6ae]">
        <span>Errors</span>
        <span>Circular</span>
        <span>Translate</span>
        <span>READ</span>
        <span>CAPS</span>
        <span className="text-black">NUM</span>
      </span>
    </footer>
  );
}

export default function App() {
  return (
    <div className="flex min-h-screen bg-[#0c0c10] p-px font-['Noto_Sans',sans-serif] text-[11px] leading-[15px] text-black">
      <Gradients />
      <div className="flex flex-1 flex-col overflow-hidden rounded-t-md border-r border-b border-l border-r-[#35c8e8] border-b-[#35c8e8] border-l-[#e4eef8] bg-[#b9d1ea]">
        <TitleBar />
        <div className="mx-1.5 mb-1.5 flex flex-1 flex-col bg-white">
          <MenuBar />
          <Toolbar />
          <div className="flex flex-1 gap-[3px] p-[3px]">
            <NavigationPane />
            <DevicePage />
            <ResourcePane />
          </div>
          <StatusBar />
        </div>
      </div>
    </div>
  );
}
